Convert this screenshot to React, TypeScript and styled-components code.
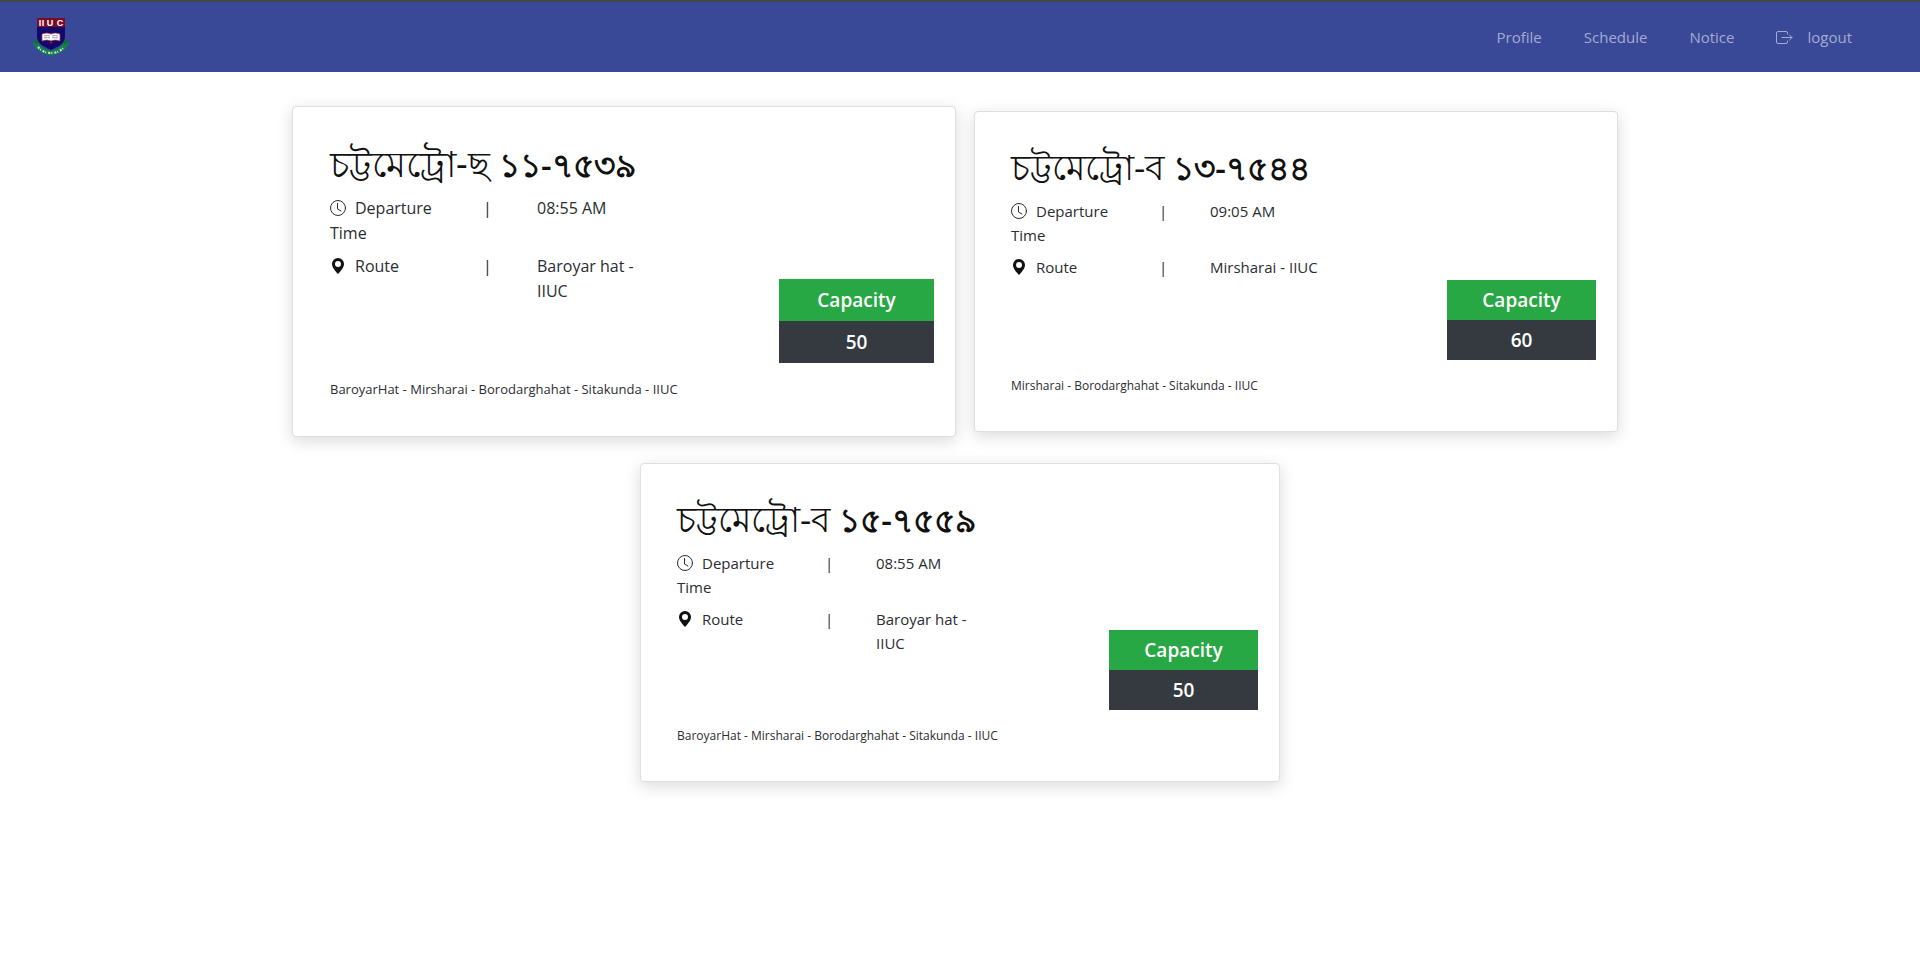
import React from "react";
import styled, { createGlobalStyle, css } from "styled-components";

const GlobalStyle = createGlobalStyle`
  *, *::before, *::after { box-sizing: border-box; }
  body {
    margin: 0;
    background: #fff;
    color: #2a2d31;
    font-family: "Open Sans", "Noto Sans", sans-serif;
    font-size: 15px;
    line-height: 24px;
  }
`;

const Header = styled.header`
  display: flex;
  align-items: center;
  justify-content: space-between;
  height: 72px;
  padding: 0 68px 0 32px;
  background: #394997;
  border-top: 2px solid #45464b;
`;

const Brand = styled.a`
  display: block;
  line-height: 0;
`;

const Nav = styled.nav`
  display: flex;
  gap: 42px;
`;

const NavLink = styled.a`
  display: flex;
  align-items: center;
  gap: 14px;
  color: #a3abd0;
  text-decoration: none;

  &:hover {
    color: #fff;
  }
`;

const CardGrid = styled.main`
  display: flex;
  flex-wrap: wrap;
  justify-content: center;
  padding: 24px 0;
`;

const Slot = styled.div`
  display: flex;
  flex: 0 0 35%;
  align-items: center;
  justify-content: center;
  min-height: 351px;
`;

type Lift = "none" | "slight" | "full";

const inset: Record<Lift, number> = { none: 32, slight: 28, full: 8 };

const Card = styled.article<{ $lift: Lift }>`
  --label: 148px;
  --bar: 51px;
  --value: 120px;
  --line: 24px;
  --title: 35px;
  --body: ${(p) => (p.$lift === "slight" ? 213 : 211)}px;
  --cell: 40px;
  --badge: 149px;
  width: calc(100% - ${(p) => inset[p.$lift]}px);
  padding: 35px 21px 35px 36px;
  background: #fff;
  border: 1px solid #dfdfdf;
  border-radius: 4px;
  box-shadow: 0 4px 16px rgba(0, 0, 0, 0.15);

  ${(p) =>
    p.$lift === "full" &&
    css`
      --label: 153px;
      --bar: 54px;
      --value: 124px;
      --line: 25px;
      --title: 36px;
      --body: 219px;
      --cell: 42px;
      --badge: 155px;
      padding: 37px 21px 37px 37px;
      font-size: 16px;
    `}
`;

const CardBody = styled.div`
  display: flex;
  justify-content: space-between;
  min-height: var(--body);
`;

const Title = styled.h2`
  margin: 0 0 12px;
  color: #111;
  font-size: var(--title);
  font-weight: 400;
  line-height: 39px;
  white-space: nowrap;
`;

const Digits = styled.span`
  font-size: 33px;
  font-weight: 600;
`;

const Facts = styled.dl`
  display: flex;
  flex-direction: column;
  gap: 8px;
  margin: 0;
`;

const Fact = styled.div`
  display: grid;
  grid-template-columns: var(--label) var(--bar) var(--value);
  line-height: var(--line);
`;

const Term = styled.dt`
  padding-right: 32px;

  svg {
    margin-right: 9px;
    vertical-align: -2px;
  }
`;

const Value = styled.dd`
  margin: 0;
`;

const Badge = styled.div`
  align-self: flex-end;
  width: var(--badge);
  color: #fff;
  font-size: 19px;
  font-weight: 600;
  line-height: var(--cell);
  text-align: center;
`;

const BadgeLabel = styled.div`
  background: #28a745;
`;

const BadgeValue = styled.div`
  background: #343a40;
`;

const Stops = styled.p<{ $lift: Lift }>`
  margin: 16px 0 0;
  font-size: ${(p) => (p.$lift === "full" ? 13 : 12)}px;
  line-height: 20px;
`;

function Crest() {
  return (
    <svg width="38" height="40" viewBox="0 0 38 40" role="img" aria-label="IIUC">
      <path d="M3 25Q8 35 19 36Q30 35 35 25" fill="none" stroke="#14804a" strokeWidth="5" />
      <path d="M1 24l6-1-2 5zM37 24l-6-1 2 5z" fill="#0e6b40" />
      <path d="M6 30Q11 36 19 36Q27 36 32 30" fill="none" stroke="#cfe9d8" strokeWidth="2" strokeDasharray="2 1 1 2" />
      <path d="M5 10h28v9c0 7-5 10-14 14C10 29 5 26 5 19z" fill="#12086b" />
      <path d="M5 1h28v9H5z" fill="#7d0a25" />
      <text y="9" textAnchor="middle" fill="#fff" fontFamily="Liberation Sans, sans-serif" fontSize="9" fontWeight="700">
        <tspan x="8">I</tspan>
        <tspan x="11">I</tspan>
        <tspan x="18">U</tspan>
        <tspan x="28">C</tspan>
      </text>
      <path d="M10 17q5-2 9 0q4-2 9 0v7q-5-2-9 0q-4-2-9 0z" fill="#fff" stroke="#a33a4c" strokeWidth=".7" />
      <path d="M12 19q4-1 6 0M12 21q4-1 6 0M20 19q4-1 6 0M20 21q4-1 6 0" fill="none" stroke="#8c7cab" strokeWidth=".8" />
      <path d="M17 25h4l-2 2z" fill="#a3122b" />
    </svg>
  );
}

function LogoutIcon() {
  return (
    <svg width="17" height="13" viewBox="0 0 17 13" fill="none" stroke="currentColor" strokeLinecap="round" strokeLinejoin="round" aria-hidden="true">
      <path d="M11.5 3V2q0-1.500-1.500-1.500H2Q.5.5.5 2v9Q.5 12.500 2 12.500h8q1.500 0 1.500-1.500v-1" />
      <path d="M6 6.500h10M13.500 4L16 6.500 13.500 9" />
    </svg>
  );
}

function ClockIcon() {
  return (
    <svg width="16" height="16" viewBox="0 0 16 16" fill="none" stroke="currentColor" strokeLinecap="round" aria-hidden="true">
      <circle cx="8" cy="8" r="7.500" />
      <path d="M7.500 3.500V9l3.500 2" />
    </svg>
  );
}

function PinIcon() {
  return (
    <svg width="16" height="16" viewBox="0 0 16 16" fill="#111" aria-hidden="true">
      <path fillRule="evenodd" d="M8 16s6-5.686 6-10A6 6 0 0 0 2 6c0 4.314 6 10 6 10zm0-7a3 3 0 1 0 0-6 3 3 0 0 0 0 6z" />
    </svg>
  );
}

interface Bus {
  series: string;
  number: string;
  time: string;
  route: string;
  capacity: number;
  stops: string;
  lift: Lift;
}

const buses: Bus[] = [
  {
    series: "চট্টমেট্রো-ছ",
    number: "১১-৭৫৩৯",
    time: "08:55 AM",
    route: "Baroyar hat - IIUC",
    capacity: 50,
    stops: "BaroyarHat - Mirsharai - Borodarghahat - Sitakunda - IIUC",
    lift: "full",
  },
  {
    series: "চট্টমেট্রো-ব",
    number: "১৩-৭৫৪৪",
    time: "09:05 AM",
    route: "Mirsharai - IIUC",
    capacity: 60,
    stops: "Mirsharai - Borodarghahat - Sitakunda - IIUC",
    lift: "slight",
  },
  {
    series: "চট্টমেট্রো-ব",
    number: "১৫-৭৫৫৯",
    time: "08:55 AM",
    route: "Baroyar hat - IIUC",
    capacity: 50,
    stops: "BaroyarHat - Mirsharai - Borodarghahat - Sitakunda - IIUC",
    lift: "none",
  },
];

function BusCard({ bus }: { bus: Bus }) {
  return (
    <Card $lift={bus.lift}>
      <CardBody>
        <div>
          <Title>
            {bus.series} <Digits>{bus.number}</Digits>
          </Title>
          <Facts>
            <Fact>
              <Term>
                <ClockIcon />
                Departure Time
              </Term>
              <span>|</span>
              <Value>{bus.time}</Value>
            </Fact>
            <Fact>
              <Term>
                <PinIcon />
                Route
              </Term>
              <span>|</span>
              <Value>{bus.route}</Value>
            </Fact>
          </Facts>
        </div>
        <Badge>
          <BadgeLabel>Capacity</BadgeLabel>
          <BadgeValue>{bus.capacity}</BadgeValue>
        </Badge>
      </CardBody>
      <Stops $lift={bus.lift}>{bus.stops}</Stops>
    </Card>
  );
}

export default function App() {
  return (
    <>
      <GlobalStyle />
      <Header>
        <Brand href="#">
          <Crest />
        </Brand>
        <Nav>
          <NavLink href="#profile">Profile</NavLink>
          <NavLink href="#schedule">Schedule</NavLink>
          <NavLink href="#notice">Notice</NavLink>
          <NavLink href="#logout">
            <LogoutIcon />
            logout
          </NavLink>
        </Nav>
      </Header>
      <CardGrid>
        {buses.map((bus) => (
          <Slot key={bus.number}>
            <BusCard bus={bus} />
          </Slot>
        ))}
      </CardGrid>
    </>
  );
}
